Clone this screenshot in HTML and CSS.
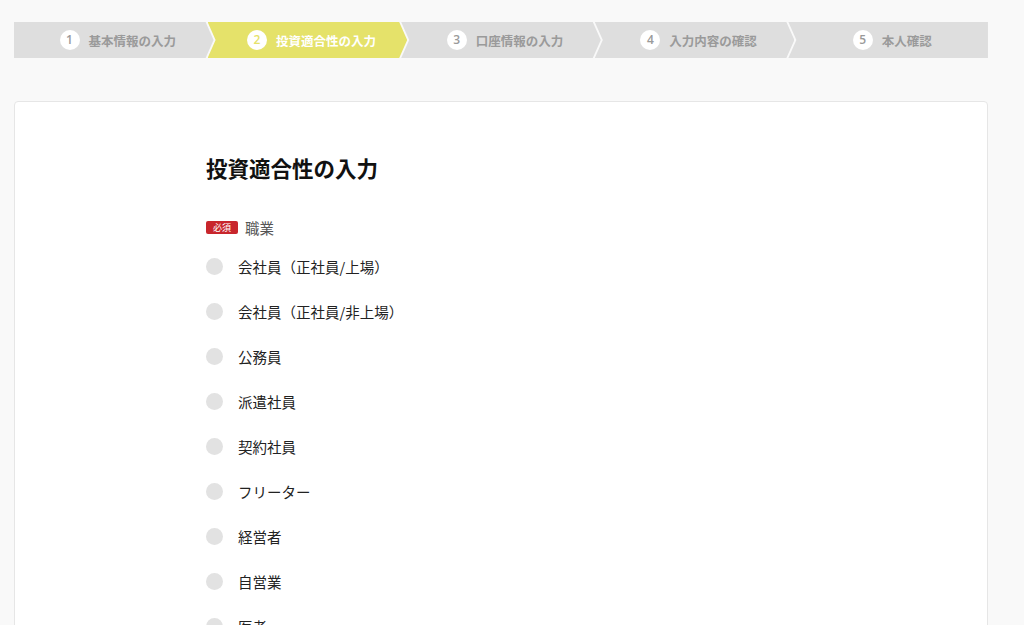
FILE: index.html
```html
<!DOCTYPE html>
<html lang="ja">
<head>
	<meta charset="UTF-8">
	<title>投資適合性の入力</title>
	<link rel="stylesheet" href="styles.css">
</head>
<body>
	<ol class="steps">
		<li class="step"><span class="step-num">1</span>基本情報の入力</li>
		<li class="step is-current"><span class="step-num">2</span>投資適合性の入力</li>
		<li class="step"><span class="step-num">3</span>口座情報の入力</li>
		<li class="step"><span class="step-num">4</span>入力内容の確認</li>
		<li class="step step-last"><span class="step-num">5</span>本人確認</li>
	</ol>

	<div class="card">
		<h1 class="card-title">投資適合性の入力</h1>
		<div class="field-label"><span class="badge">必須</span>職業</div>
		<ul class="radio-list">
			<li class="radio-item"><span class="radio"></span>会社員（正社員/上場）</li>
			<li class="radio-item"><span class="radio"></span>会社員（正社員/非上場）</li>
			<li class="radio-item"><span class="radio"></span>公務員</li>
			<li class="radio-item"><span class="radio"></span>派遣社員</li>
			<li class="radio-item"><span class="radio"></span>契約社員</li>
			<li class="radio-item"><span class="radio"></span>フリーター</li>
			<li class="radio-item"><span class="radio"></span>経営者</li>
			<li class="radio-item"><span class="radio"></span>自営業</li>
			<li class="radio-item"><span class="radio"></span>医者</li>
			<li class="radio-item"><span class="radio"></span>学生</li>
			<li class="radio-item"><span class="radio"></span>その他</li>
		</ul>
	</div>
</body>
</html>
```

FILE: styles.css
```css
html, body, ol, ul, li, h1, div, span {
	margin: 0;
	padding: 0;
}
body {
	background-color: #f9f9f9;
	font-family: "Noto Sans CJK JP", "Noto Sans", sans-serif;
	color: #222;
}
ol, ul {
	list-style: none;
}

/* ステップ表示 */
.steps {
	display: flex;
	height: 36px;
	margin: 22px 36px 0 14px;
}
.step {
	flex: 1 1 0;
	display: flex;
	align-items: center;
	justify-content: center;
	gap: 9px;
	margin-left: -6px;
	padding-left: 8px;
	background-color: #dedede;
	color: #9a9a9a;
	font-size: 12.5px;
	font-weight: bold;
	clip-path: polygon(0 0, calc(100% - 8px) 0, 100% 50%, calc(100% - 8px) 100%, 0 100%, 8px 50%);
}
.step:first-child {
	margin-left: 0;
	clip-path: polygon(0 0, calc(100% - 8px) 0, 100% 50%, calc(100% - 8px) 100%, 0 100%);
}
.step-last {
	clip-path: polygon(0 0, 100% 0, 100% 100%, 0 100%, 8px 50%);
}
.step-num {
	width: 20px;
	height: 20px;
	border-radius: 50%;
	background-color: #fff;
	color: #9a9a9a;
	font-family: "Open Sans", sans-serif;
	font-size: 12px;
	font-weight: 600;
	line-height: 20px;
	text-align: center;
}
.step.is-current {
	background-color: #e5e26a;
	color: #fff;
}
.step.is-current .step-num {
	color: #e5e26a;
}

/* カード */
.card {
	margin: 43px 36px 0 14px;
	padding: 51px 0 40px 191px;
	background-color: #fff;
	border: 1px solid #e6e6e6;
	border-radius: 4px;
}
.card-title {
	font-size: 21.5px;
	line-height: 30px;
	font-weight: bold;
	color: #111;
	margin-bottom: 34px;
}
.field-label {
	display: flex;
	align-items: center;
	gap: 7px;
	height: 20px;
	font-size: 14.5px;
	color: #555;
	margin-bottom: 7px;
}
.badge {
	display: inline-block;
	width: 32px;
	height: 13px;
	line-height: 13px;
	border-radius: 2px;
	background-color: #c8262c;
	color: #fff;
	font-size: 9px;
	text-align: center;
}
.radio-item {
	display: flex;
	align-items: center;
	gap: 15px;
	height: 45px;
	font-size: 14.5px;
	color: #222;
}
.radio {
	width: 17px;
	height: 17px;
	border-radius: 50%;
	background-color: #e2e2e2;
}
```
